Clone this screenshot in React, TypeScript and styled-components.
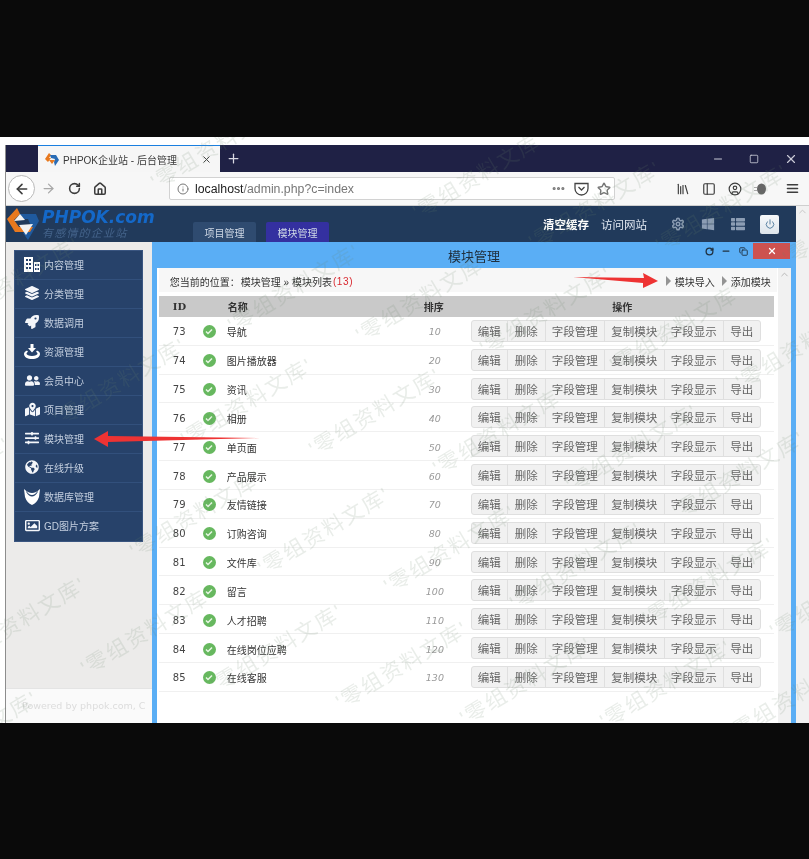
import React from 'react';
import styled, { createGlobalStyle } from 'styled-components';
import {
  FaRocket,
  FaUserFriends,
  FaMapMarkedAlt,
  FaSlidersH,
  FaGlobeAmericas,
  FaRegImage,
  FaLayerGroup,
  FaWindows,
  FaThList,
} from 'react-icons/fa';
import {
  LuArrowLeft,
  LuArrowRight,
  LuRotateCw,
  LuHouse,
  LuInfo,
  LuEllipsis,
  LuStar,
  LuMenu,
  LuPower,
  LuX,
  LuMinus,
  LuSquare,
  LuPlus,
  LuChevronUp,
  LuCircleUser,
  LuLibrary,
  LuPanelLeft,
  LuCopy,
  LuSettings,
} from 'react-icons/lu';

const FONT = `"Liberation Sans", "Noto Sans CJK SC", sans-serif`;

const GlobalStyle = createGlobalStyle`
  html, body { margin: 0; padding: 0; background: #0a0a0a; }
  * { box-sizing: border-box; }
`;

const Page = styled.div`
  width: 809px;
  height: 859px;
  background: #0a0a0a;
  padding-top: 137px;
  font-family: ${FONT};
  overflow: hidden;
`;

const Shot = styled.div`
  position: relative;
  height: 586px;
  background: #fff;
  padding: 8px 0 0 5px;
  overflow: hidden;
  filter: blur(0.45px);
`;

const Browser = styled.div`
  display: flex;
  flex-direction: column;
  height: 578px;
  border-left: 1px solid #8d8d8d;
`;

const TabStrip = styled.div`
  height: 27px;
  background: #1f2145;
  display: flex;
  align-items: stretch;
  padding-left: 32px;
  color: #d9d9e2;
`;

const Tab = styled.div`
  width: 182px;
  background: #f6f6f6;
  border-top: 1px solid #1a7fe0;
  display: flex;
  align-items: center;
  padding: 0 8px 0 7px;
  color: #3a3a3a;
  font-size: 10px;
`;

const TabTitle = styled.span`
  margin-left: 4px;
  flex: 1;
  white-space: nowrap;
`;

const NewTab = styled.div`
  width: 26px;
  display: flex;
  align-items: center;
  justify-content: center;
`;

const WindowControls = styled.div`
  margin-left: auto;
  display: flex;
  align-items: center;
  gap: 25px;
  padding-right: 11px;
  color: #c9cad6;
`;

const NavBar = styled.div`
  height: 34px;
  background: #f7f7f7;
  border-bottom: 1px solid #cfcfcf;
  display: flex;
  align-items: center;
  padding-left: 2px;
  color: #3d3d3d;
`;

const BackButton = styled.div`
  width: 27px;
  height: 27px;
  border: 1px solid #b9b9b9;
  border-radius: 50%;
  background: #fff;
  display: flex;
  align-items: center;
  justify-content: center;
`;

const NavIcons = styled.div`
  display: flex;
  align-items: center;
  gap: 12px;
  margin-left: 6px;
`;

const UrlBar = styled.div`
  width: 446px;
  height: 23px;
  margin-left: 62px;
  background: #fff;
  border: 1px solid #d2d2d2;
  border-radius: 2px;
  display: flex;
  align-items: center;
  padding: 0 3px 0 7px;
  font-size: 12.3px;
  color: #777;
`;

const Host = styled.span`
  color: #222;
  margin-left: 6px;
`;

const UrlActions = styled.div`
  margin-left: auto;
  display: flex;
  align-items: center;
  gap: 8px;
`;

const ToolIcons = styled.div`
  margin-left: 61px;
  display: flex;
  align-items: center;
  gap: 12px;
  & > :last-child {
    margin-left: 5px;
  }
`;

const AppHeader = styled.div`
  height: 36px;
  background: #213a5b;
  display: flex;
`;

const Logo = styled.div`
  width: 152px;
  height: 36px;
  padding: 2px 0 0 1px;
  display: flex;
`;

const Brand = styled.div`
  margin-left: 3px;
  display: flex;
  flex-direction: column;
`;

const BrandName = styled.span`
  font-family: "DejaVu Sans", sans-serif;
  font-size: 17px;
  line-height: 18px;
  font-weight: 700;
  font-style: italic;
  color: #1468c8;
`;

const Slogan = styled.span`
  font-size: 11px;
  line-height: 14px;
  font-style: italic;
  letter-spacing: 1.2px;
  color: #44638a;
`;

const HeaderTabs = styled.div`
  display: flex;
  align-items: flex-end;
  gap: 10px;
  margin-left: 35px;
`;

const HeaderTab = styled.div<{ $active?: boolean }>`
  width: 63px;
  height: 20px;
  background: ${(p) => (p.$active ? '#3430a0' : '#2f4b70')};
  color: #d0d9e6;
  font-size: 10px;
  display: flex;
  align-items: center;
  justify-content: center;
  border-radius: 2px 2px 0 0;
`;

const HeaderRight = styled.div`
  margin-left: auto;
  display: flex;
  align-items: center;
  padding-right: 17px;
`;

const HeaderLink = styled.span<{ $bold?: boolean }>`
  font-size: 11.5px;
  font-weight: ${(p) => (p.$bold ? 700 : 400)};
  color: ${(p) => (p.$bold ? '#fff' : '#dfe6f0')};
  margin-right: 12px;
`;

const HeaderIcons = styled.div`
  display: flex;
  align-items: center;
  gap: 16px;
  margin-left: 12px;
  color: #8c9db4;
`;

const PowerButton = styled.div`
  width: 19px;
  height: 19px;
  margin-left: 15px;
  background: linear-gradient(#f6f8fa, #dde5ec);
  color: #3f6f94;
  border-radius: 2px;
  display: flex;
  align-items: center;
  justify-content: center;
`;

const Body = styled.div`
  flex: 1;
  display: flex;
  min-height: 0;
`;

const Sidebar = styled.aside`
  width: 146px;
  background: #ecebea;
  display: flex;
  flex-direction: column;
  padding-top: 8px;
`;

const Menu = styled.nav`
  width: 129px;
  margin-left: 8px;
  background: #27426a;
  border: 1px solid #3a5580;
`;

const MenuItem = styled.div`
  height: 29px;
  display: flex;
  align-items: center;
  padding: 0 0 2px 9px;
  color: #f4f6fa;
  border-bottom: 1px solid #32507c;
  &:last-child {
    border-bottom: 0;
  }
`;

const MenuIcon = styled.span`
  width: 16px;
  height: 16px;
  display: flex;
  align-items: center;
  justify-content: center;
  margin-right: 4px;
`;

const MenuLabel = styled.span`
  font-size: 10px;
  color: #c4cfdf;
`;

const SideFooter = styled.div`
  margin-top: auto;
  height: 35px;
  background: #fafafa;
  border-top: 1px solid #e4e4e4;
  padding: 11px 0 0 16px;
  font-family: "DejaVu Sans", sans-serif;
  font-size: 9.5px;
  color: #dcdcdc;
  white-space: nowrap;
  overflow: hidden;
`;

const Win = styled.section`
  width: 645px;
  background: #5aaef5;
  padding: 0 5px;
  display: flex;
  flex-direction: column;
`;

const WinTitleBar = styled.div`
  height: 26px;
  position: relative;
  display: flex;
  align-items: center;
  justify-content: center;
  font-size: 13px;
  color: #20303f;
`;

const WinControls = styled.div`
  position: absolute;
  top: 1px;
  right: 1px;
  display: flex;
  align-items: center;
  height: 16px;
  gap: 7.5px;
  color: #20303f;
`;

const WinClose = styled.div`
  width: 37px;
  height: 16px;
  margin-left: -2px;
  background: #cd5250;
  color: #fff;
  display: flex;
  align-items: center;
  justify-content: center;
`;

const WinBody = styled.div`
  flex: 1;
  background: #fff;
  display: flex;
`;

const Main = styled.div`
  flex: 1;
  padding-left: 2px;
`;

const ScrollTrack = styled.div`
  width: 13px;
  background: #f1f1f1;
  color: #b4b4b4;
  display: flex;
  justify-content: center;
  padding-top: 1px;
`;

const Crumbs = styled.div`
  height: 24px;
  width: 618px;
  background: #f7f7f7;
  display: flex;
  align-items: center;
  padding: 2px 6px 0 11px;
  font-size: 10px;
  color: #333;
`;

const CrumbLabel = styled.span`
  width: 71px;
`;

const Count = styled.span`
  color: #d9282f;
  letter-spacing: 0.6px;
  margin-left: 1px;
`;

const CrumbActions = styled.div`
  margin-left: auto;
  display: flex;
  align-items: center;
  gap: 7px;
`;

const CrumbAction = styled.span`
  display: flex;
  align-items: center;
  gap: 4px;
`;

const Triangle = styled.i`
  width: 0;
  height: 0;
  border-left: 5px solid #949494;
  border-top: 5px solid transparent;
  border-bottom: 5px solid transparent;
`;

const Table = styled.div`
  width: 615px;
  margin-top: 4px;
`;

const columns = '44px 24px 180px 37px 27px 303px';

const HeadRow = styled.div`
  height: 21px;
  background: #c9c9c9;
  display: grid;
  grid-template-columns: ${columns};
  align-items: center;
  font-size: 10px;
  font-weight: 700;
  color: #333;
`;

const IdHead = styled.span`
  padding-left: 14px;
  font-family: "DejaVu Serif", serif;
  font-size: 10px;
`;

const NameHead = styled.span`
  padding-left: 1px;
`;

const SortHead = styled.span`
  text-align: right;
`;

const OpHead = styled.span`
  text-align: center;
`;

const Row = styled.div`
  height: 28.83px;
  display: grid;
  grid-template-columns: ${columns};
  align-items: center;
  border-bottom: 1px solid #f0f0f0;
  font-size: 10px;
  color: #333;
`;

const IdCell = styled.span`
  padding: 2px 0 0 14px;
  font-family: "DejaVu Sans", sans-serif;
  font-size: 10px;
  color: #444;
`;

const NameCell = styled.span`
  padding-top: 2px;
`;

const StatusDot = styled.span`
  width: 13px;
  height: 13px;
  margin-top: 2px;
  border-radius: 50%;
  background: #67b85f;
  display: flex;
  align-items: center;
  justify-content: center;
`;

const SortCell = styled.span`
  padding: 2px 0 0 19px;
  text-align: center;
  font-family: "DejaVu Sans", sans-serif;
  font-style: italic;
  font-size: 9.5px;
  color: #9a9a9a;
`;

const ButtonGroup = styled.div`
  display: flex;
  width: 290px;
  height: 22px;
  border: 1px solid #dfdfdf;
  border-radius: 3px;
  background: #f1f1f1;
  overflow: hidden;
`;

const ActionButton = styled.span<{ $width: number }>`
  width: ${(p) => p.$width}px;
  display: flex;
  align-items: center;
  justify-content: center;
  font-size: 11.5px;
  color: #666;
  border-right: 1px solid #dfdfdf;
  &:last-child {
    border-right: 0;
  }
`;

const OuterScroll = styled.div`
  flex: 1;
  background: #f1f1f1;
  color: #c4c4c4;
  display: flex;
  justify-content: center;
`;

const Viewport = styled.div`
  flex: 1;
  display: flex;
  min-height: 0;
`;

const Column = styled.div`
  width: 790px;
  display: flex;
  flex-direction: column;
`;

const Overlay = styled.div`
  position: absolute;
  inset: 0;
  pointer-events: none;
  overflow: hidden;
`;

const Watermark = styled.span<{ $x: number; $y: number }>`
  position: absolute;
  left: ${(p) => p.$x}px;
  top: ${(p) => p.$y - 149}px;
  font-size: 21px;
  line-height: 24px;
  white-space: nowrap;
  color: rgba(110, 135, 110, 0.15);
  transform-origin: left center;
  transform: rotate(-31deg);
  letter-spacing: 2px;
`;

const Arrow = styled.svg`
  position: absolute;
  pointer-events: none;
`;

const LeftArrow = styled(Arrow)`
  left: 90px;
  top: 294px;
`;

const RightArrow = styled(Arrow)`
  left: 570px;
  top: 132px;
`;

const ColoredLogo = () => (
  <svg width="32" height="33" viewBox="0 0 32 33">
    <path d="M12 6 L29 6 L32 13 L21 32 L16 25 L24 18 L21 11 L15 11 Z" fill="#1f5a9e" />
    <path d="M10 0 L0 11 L8 24 L23 24 L26 19 L12 19 L7 12 L13 6 Z" fill="#e8791f" />
    <path d="M13 6 L7 13 L18 12 Z" fill="#f2f2f2" />
    <path d="M12 17 L26 16 L19 27 Z" fill="#f2f2f2" />
  </svg>
);

const Favicon = () => (
  <svg width="14" height="13" viewBox="0 0 14 13">
    <path d="M4 0 L0 6 L3 9 L6 5 L4 5 L6 2 Z" fill="#e8791f" />
    <path d="M5 2 L11 2 L14 7 L10 13 L9 9 L10 6 L6 5 Z" fill="#2a6cb5" />
    <path d="M4 7 L10 7 L7 11 Z" fill="#e8791f" />
  </svg>
);

const GridIcon = () => (
  <svg width="16" height="15" viewBox="0 0 16 15" fill="#fff">
    <path d="M0 0h9v15H0zM10 5h6v10h-6z" />
    <path d="M2 2h2v2H2zM5 2h2v2H5zM2 6h2v2H2zM5 6h2v2H5zM2 10h2v2H2zM5 10h2v2H5zM11 7h1.500v2H11zM13.500 7H15v2h-1.500zM11 11h1.500v2H11zM13.500 11H15v2h-1.500z" fill="#27426a" />
  </svg>
);

const TrayIcon = () => (
  <svg width="16" height="15" viewBox="0 0 16 15" fill="#fff">
    <path d="M6.500 0h3v4H12L8 8.500 4 4h2.500z" />
    <path d="M3 6.500C1 7.500 0 8.500 0 10c0 3 3.500 5 8 5s8-2 8-5c0-1.500-1-2.500-3-3.500l-1 1.300c1 .6 1.500 1.200 1.500 2 0 1.200-2.500 2.200-5.500 2.200S2.500 11 2.500 9.800c0-.8.5-1.400 1.500-2z" />
  </svg>
);

const MaskIcon = () => (
  <svg width="16" height="17" viewBox="0 0 16 17" fill="#fff">
    <path d="M0 1 Q4 5 8 5 Q12 5 16 1 L15 9 Q13 15 8 17 Q3 15 1 9 Z" />
    <path d="M2 2.500 Q5 7 8 7 Q11 7 14 2.500 L13.500 4.500 Q11 8.500 8 8.500 Q5 8.500 2.500 4.500 Z" fill="#27426a" />
  </svg>
);

const PocketIcon = () => (
  <svg width="15" height="14" viewBox="0 0 15 14" fill="none" stroke="#444" strokeWidth="1.3">
    <path d="M1 1.500h13v5a6.500 6.500 0 0 1-13 0z" />
    <path d="M4.500 5l3 3 3-3" />
  </svg>
);

const BugIcon = () => (
  <svg width="14" height="14" viewBox="0 0 14 14" fill="#666">
    <ellipse cx="7.500" cy="7" rx="4.500" ry="5.500" />
    <path d="M0 5h3v1H0zM0 8h3v1H0z" fill="#aaa" />
  </svg>
);

const CheckDot = () => (
  <StatusDot>
    <svg width="8" height="7" viewBox="0 0 8 7" fill="none" stroke="#e8f6e4" strokeWidth="1.5">
      <path d="M1 3.500l2 2 4-4" />
    </svg>
  </StatusDot>
);

const MENU = [
  { label: '内容管理', icon: <GridIcon /> },
  { label: '分类管理', icon: <FaLayerGroup size={14} /> },
  { label: '数据调用', icon: <FaRocket size={14} /> },
  { label: '资源管理', icon: <TrayIcon /> },
  { label: '会员中心', icon: <FaUserFriends size={15} /> },
  { label: '项目管理', icon: <FaMapMarkedAlt size={15} /> },
  { label: '模块管理', icon: <FaSlidersH size={14} /> },
  { label: '在线升级', icon: <FaGlobeAmericas size={14} /> },
  { label: '数据库管理', icon: <MaskIcon /> },
  { label: 'GD图片方案', icon: <FaRegImage size={15} /> },
];

const MODULES = [
  [73, '导航', 10],
  [74, '图片播放器', 20],
  [75, '资讯', 30],
  [76, '相册', 40],
  [77, '单页面', 50],
  [78, '产品展示', 60],
  [79, '友情链接', 70],
  [80, '订购咨询', 80],
  [81, '文件库', 90],
  [82, '留言', 100],
  [83, '人才招聘', 110],
  [84, '在线岗位应聘', 120],
  [85, '在线客服', 130],
] as const;

const ACTIONS = [
  { label: '编辑', width: 36 },
  { label: '删除', width: 38 },
  { label: '字段管理', width: 59 },
  { label: '复制模块', width: 60 },
  { label: '字段显示', width: 59 },
  { label: '导出', width: 36 },
];

// start of each watermark, in page pixels
const WATERMARKS = [
  [153, 184], [415, 214], [531, 244], [658, 247], [785, 260],
  [-50, 320], [230, 327], [358, 337], [482, 350], [612, 367], [738, 384],
  [56, 421], [183, 441], [311, 451], [435, 470], [568, 487], [675, 514],
  [-120, 520], [132, 553], [260, 570], [386, 588], [512, 605], [645, 620], [772, 633],
  [-44, 660], [83, 670], [213, 687], [338, 704], [462, 720], [602, 723], [730, 735], [-92, 774],
];

const App = () => (
  <>
    <GlobalStyle />
    <Page>
      <Shot>
        <Browser>
          <TabStrip>
            <Tab>
              <Favicon />
              <TabTitle>PHPOK企业站 - 后台管理</TabTitle>
              <LuX size={11} />
            </Tab>
            <NewTab>
              <LuPlus size={15} />
            </NewTab>
            <WindowControls>
              <LuMinus size={12} />
              <LuSquare size={10} />
              <LuX size={14} />
            </WindowControls>
          </TabStrip>
          <NavBar>
            <BackButton>
              <LuArrowLeft size={16} strokeWidth={2.4} />
            </BackButton>
            <NavIcons>
              <LuArrowRight size={15} color="#a8a8a8" />
              <LuRotateCw size={13} strokeWidth={2.8} />
              <LuHouse size={14} strokeWidth={2.6} />
            </NavIcons>
            <UrlBar>
              <LuInfo size={12} />
              <Host>localhost</Host>/admin.php?c=index
              <UrlActions>
                <LuEllipsis size={15} strokeWidth={3} />
                <PocketIcon />
                <LuStar size={14} strokeWidth={2.4} />
              </UrlActions>
            </UrlBar>
            <ToolIcons>
              <LuLibrary size={14} />
              <LuPanelLeft size={14} />
              <LuCircleUser size={14} />
              <BugIcon />
              <LuMenu size={15} strokeWidth={2.6} />
            </ToolIcons>
          </NavBar>
          <Viewport>
            <Column>
              <AppHeader>
                <Logo>
                  <ColoredLogo />
                  <Brand>
                    <BrandName>PHPOK.com</BrandName>
                    <Slogan>有感情的企业站</Slogan>
                  </Brand>
                </Logo>
                <HeaderTabs>
                  <HeaderTab>项目管理</HeaderTab>
                  <HeaderTab $active>模块管理</HeaderTab>
                </HeaderTabs>
                <HeaderRight>
                  <HeaderLink $bold>清空缓存</HeaderLink>
                  <HeaderLink>访问网站</HeaderLink>
                  <HeaderIcons>
                    <LuSettings size={14} strokeWidth={2.6} />
                    <FaWindows size={14} />
                    <FaThList size={14} />
                  </HeaderIcons>
                  <PowerButton>
                    <LuPower size={10} />
                  </PowerButton>
                </HeaderRight>
              </AppHeader>
              <Body>
                <Sidebar>
                  <Menu>
                    {MENU.map((item) => (
                      <MenuItem key={item.label}>
                        <MenuIcon>{item.icon}</MenuIcon>
                        <MenuLabel>{item.label}</MenuLabel>
                      </MenuItem>
                    ))}
                  </Menu>
                  <SideFooter>Powered by phpok.com, C</SideFooter>
                </Sidebar>
                <Win>
                  <WinTitleBar>
                    模块管理
                    <WinControls>
                      <LuRotateCw size={9} strokeWidth={3.5} />
                      <LuMinus size={10} strokeWidth={3} />
                      <LuCopy size={9} strokeWidth={2.4} />
                      <WinClose>
                        <LuX size={10} strokeWidth={3} />
                      </WinClose>
                    </WinControls>
                  </WinTitleBar>
                  <WinBody>
                    <Main>
                      <Crumbs>
                        <CrumbLabel>您当前的位置：</CrumbLabel>
                        模块管理 » 模块列表
                        <Count>(13)</Count>
                        <CrumbActions>
                          <CrumbAction>
                            <Triangle />
                            模块导入
                          </CrumbAction>
                          <CrumbAction>
                            <Triangle />
                            添加模块
                          </CrumbAction>
                        </CrumbActions>
                      </Crumbs>
                      <Table>
                        <HeadRow>
                          <IdHead>ID</IdHead>
                          <span />
                          <NameHead>名称</NameHead>
                          <SortHead>排序</SortHead>
                          <span />
                          <OpHead>操作</OpHead>
                        </HeadRow>
                        {MODULES.map(([id, name, sort]) => (
                          <Row key={id}>
                            <IdCell>{id}</IdCell>
                            <CheckDot />
                            <NameCell>{name}</NameCell>
                            <SortCell>{sort}</SortCell>
                            <span />
                            <ButtonGroup>
                              {ACTIONS.map((action) => (
                                <ActionButton key={action.label} $width={action.width}>
                                  {action.label}
                                </ActionButton>
                              ))}
                            </ButtonGroup>
                          </Row>
                        ))}
                      </Table>
                    </Main>
                    <ScrollTrack>
                      <LuChevronUp size={11} />
                    </ScrollTrack>
                  </WinBody>
                </Win>
              </Body>
            </Column>
            <OuterScroll>
              <LuChevronUp size={11} />
            </OuterScroll>
          </Viewport>
        </Browser>
        <Overlay>
          {WATERMARKS.map(([x, y]) => (
            <Watermark key={`${x}-${y}`} $x={x} $y={y}>
              '零组资料文库'
            </Watermark>
          ))}
        </Overlay>
        <LeftArrow width="172" height="18" viewBox="0 0 172 18">
          <path d="M170 7 L18 5 L18 0 L4 8 L18 16 L18 11 Z" fill="#ee3333" />
        </LeftArrow>
        <RightArrow width="92" height="22" viewBox="0 0 92 22">
          <path d="M3 8 L74 9 L73 4 L88 12 L73 19 L73 14 Z" fill="#ee3333" />
        </RightArrow>
      </Shot>
    </Page>
  </>
);

export default App;
